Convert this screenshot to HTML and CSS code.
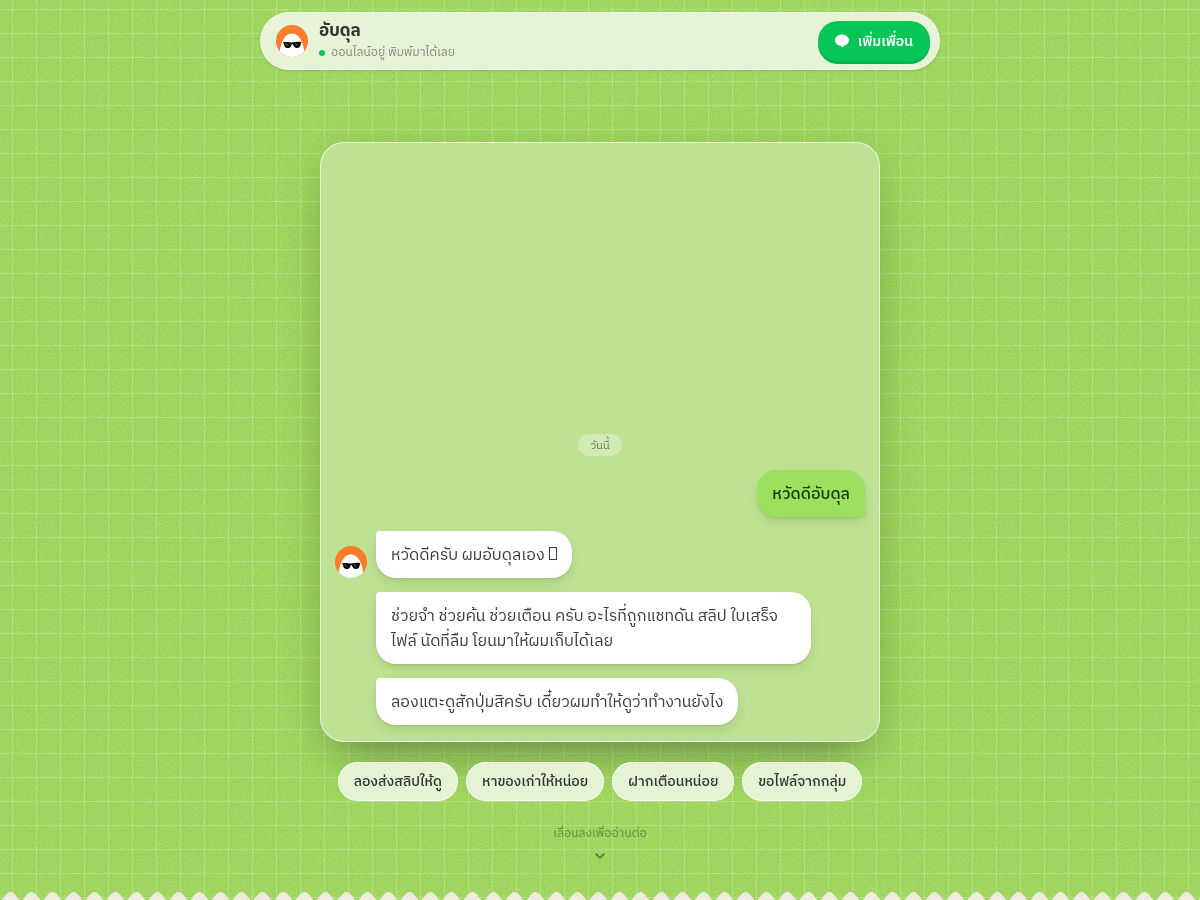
FILE: index.html
```html
<!DOCTYPE html>
<html lang="th">
<head>
    <meta charset="UTF-8">
    <meta name="viewport" content="width=device-width, initial-scale=1.0">
    <title>อับดุล</title>
    <link rel="stylesheet" href="styles.css">
</head>
<body>
    <svg class="defs" aria-hidden="true">
        <symbol id="avatar" viewBox="0 0 32 32">
            <clipPath id="round"><circle cx="16" cy="16" r="16"/></clipPath>
            <g clip-path="url(#round)">
                <rect width="32" height="32" fill="#fb7d2b"/>
                <path d="M3.500 33c0-9 1.500-15 4.500-19.500C10 10 12.500 8.500 16 8.500s6 1.500 8 5C27 18 28.500 24 28.500 33z" fill="#fff"/>
                <path d="M7 17.200c3-.5 6-.4 9 .2 3-.7 5.800-.9 9-.5l.6.800-.7.500c-.2 3.200-1.500 4.800-3.900 4.800-2.300 0-3.500-1.400-4.100-3.800h-1.300c-.5 2.500-1.700 3.900-3.900 3.900-2.500 0-3.700-1.600-3.900-4.800l-1-.4z" fill="#0b0b0b"/>
                <path d="M9.500 18.400l2.500 2M19 18.400l2.500 2" stroke="#888" stroke-width=".8"/>
            </g>
        </symbol>
    </svg>

    <div class="page">
        <svg class="noise" aria-hidden="true">
            <filter id="grain" x="0" y="0" width="100%" height="100%" color-interpolation-filters="sRGB">
                <feTurbulence type="fractalNoise" baseFrequency="0.8" numOctaves="2"/>
                <feColorMatrix type="matrix" values="2 0 0 0 -0.500  2 0 0 0 -0.500  2 0 0 0 -0.500  0 0 0 0 1"/>
            </filter>
            <rect width="100%" height="100%" filter="url(#grain)"/>
        </svg>

        <header class="topbar">
            <svg class="avatar"><use href="#avatar"/></svg>
            <div class="who">
                <h1 class="name">อับดุล</h1>
                <p class="status"><span class="dot"></span>ออนไลน์อยู่ พิมพ์มาได้เลย</p>
            </div>
            <button class="add-friend" type="button">
                <svg class="bubble-icon" viewBox="0 0 14 14"><path d="M7 .5c3.900 0 7 2.500 7 5.800 0 2.800-2.200 4.900-5 5.500L7.200 13.600 6.300 12C2.700 11.700 0 9.400 0 6.300 0 3 3.100.5 7 .5z" fill="#fff"/></svg>
                เพิ่มเพื่อน
            </button>
        </header>

        <main class="hero">
            <section class="chat">
                <span class="day">วันนี้</span>
                <p class="msg mine">หวัดดีอับดุล</p>
                <div class="row">
                    <svg class="avatar"><use href="#avatar"/></svg>
                    <p class="msg">หวัดดีครับ ผมอับดุลเอง <span class="tofu"></span></p>
                </div>
                <p class="msg indent">ช่วยจำ ช่วยค้น ช่วยเตือน ครับ อะไรที่ถูกแชทดัน สลิป ใบเสร็จ ไฟล์ นัดที่ลืม โยนมาให้ผมเก็บได้เลย</p>
                <p class="msg indent">ลองแตะดูสักปุ่มสิครับ เดี๋ยวผมทำให้ดูว่าทำงานยังไง</p>
            </section>

            <div class="chips">
                <button class="chip" type="button">ลองส่งสลิปให้ดู</button>
                <button class="chip" type="button">หาของเก่าให้หน่อย</button>
                <button class="chip" type="button">ฝากเตือนหน่อย</button>
                <button class="chip" type="button">ขอไฟล์จากกลุ่ม</button>
            </div>

            <div class="hint">
                <span>เลื่อนลงเพื่ออ่านต่อ</span>
                <svg class="chevron" viewBox="0 0 16 16"><path d="M4 6l4 4 4-4" fill="none" stroke="currentColor" stroke-width="1.600" stroke-linecap="round" stroke-linejoin="round"/></svg>
            </div>
        </main>

        <svg class="scallop" aria-hidden="true">
            <pattern id="wave" width="21" height="8" patternUnits="userSpaceOnUse">
                <path d="M0 8h1.500C4 6 6.500 0 10.500 0S17 6 19.500 8H21z" fill="#f0ebe0"/>
            </pattern>
            <rect width="100%" height="8" fill="url(#wave)"/>
        </svg>
    </div>
</body>
</html>
```
FILE: styles.css
```css
* {
    box-sizing: border-box;
}

body {
    margin: 0;
    font-family: "IBM Plex Sans Thai", "Noto Sans Thai", "Noto Sans", sans-serif;
    color: #333;
}

h1, p {
    margin: 0;
}

button {
    font-family: inherit;
    cursor: pointer;
}

.defs {
    position: absolute;
    width: 0;
    height: 0;
}

.page {
    position: relative;
    isolation: isolate;
    display: flex;
    flex-direction: column;
    align-items: center;
    min-height: 100vh;
    padding-top: 12px;
    background-color: #a0d760;
    background-image:
        linear-gradient(rgba(255, 255, 255, 0.22) 1px, transparent 1px),
        linear-gradient(90deg, rgba(255, 255, 255, 0.22) 1px, transparent 1px);
    background-size: 24px 24px;
    background-position: 12px 9px;
}

.noise {
    position: absolute;
    inset: 0;
    z-index: -1;
    width: 100%;
    height: 100%;
    opacity: 0.22;
    mix-blend-mode: soft-light;
}

/* top bar */
.topbar {
    display: flex;
    align-items: center;
    gap: 11px;
    width: calc(100% - 24px);
    max-width: 680px;
    height: 58px;
    padding: 0 9px 0 15px;
    border: 1px solid rgba(255, 255, 255, 0.6);
    border-radius: 29px;
    background: #e6f3d6;
    box-shadow: 0 1px 3px rgba(40, 80, 10, 0.2);
}

.avatar {
    flex: none;
    width: 32px;
    height: 32px;
}

.who {
    flex: 1;
    padding-top: 2px;
}

.name {
    font-size: 17px;
    line-height: 21px;
    font-weight: 700;
}

.status {
    display: flex;
    align-items: center;
    gap: 6px;
    font-size: 12px;
    line-height: 21px;
    color: #7f8878;
}

.dot {
    width: 6px;
    height: 6px;
    border-radius: 50%;
    background: #06c755;
}

.add-friend {
    display: flex;
    align-items: center;
    gap: 9px;
    height: 40px;
    padding: 0 17px;
    border: 0;
    border-radius: 20px;
    background: #06c755;
    box-shadow: 0 3px 0 #05b94f;
    color: #fff;
    font-size: 14px;
    font-weight: 600;
}

.bubble-icon {
    width: 14px;
    height: 14px;
}

/* chat */
.hero {
    flex: 1;
    display: flex;
    flex-direction: column;
    align-items: center;
    width: 100%;
    padding: 72px 12px 0;
}

.chat {
    display: flex;
    flex-direction: column;
    justify-content: flex-end;
    align-items: flex-start;
    gap: 14px;
    width: 100%;
    max-width: 560px;
    min-height: 600px;
    padding: 16px 14px;
    border: 1px solid rgba(255, 255, 255, 0.7);
    border-radius: 24px;
    background: #bfe193;
    box-shadow: 0 24px 48px -20px rgba(70, 80, 50, 0.65), 0 4px 40px rgba(80, 130, 30, 0.15);
}

.day {
    align-self: center;
    padding: 2px 12px 0;
    border-radius: 11px;
    background: rgba(255, 255, 255, 0.3);
    color: #6b7d58;
    font-size: 11px;
    line-height: 20px;
}

.msg {
    max-width: 435px;
    padding: 12px 15px 10px;
    border-radius: 4px 20px 20px 20px;
    background: #fff;
    box-shadow: 0 1px 2px rgba(40, 70, 10, 0.12), 0 6px 14px -4px rgba(40, 70, 10, 0.2);
    color: #3a3a3a;
    font-size: 16px;
    line-height: 25px;
}

.mine {
    align-self: flex-end;
    border-radius: 20px 20px 4px 20px;
    background: #9be15d;
    color: #173a0a;
    font-weight: 500;
}

.row {
    display: flex;
    align-items: flex-end;
    gap: 9px;
}

.indent {
    margin-left: 41px;
}

.tofu {
    display: inline-block;
    width: 8px;
    height: 13px;
    margin-left: 1px;
    border: 1px solid #3a3a3a;
}

.chips {
    display: flex;
    flex-wrap: wrap;
    justify-content: center;
    gap: 8px;
    padding-top: 20px;
}

.chip {
    height: 39px;
    padding: 0 15px;
    border: 1px solid rgba(255, 255, 255, 0.7);
    border-radius: 20px;
    background: #e5f3d5;
    color: #333;
    font-size: 14px;
    font-weight: 500;
}

.hint {
    display: flex;
    flex-direction: column;
    align-items: center;
    gap: 4px;
    padding-top: 23px;
    color: #64873c;
    font-size: 12px;
    line-height: 20px;
}

.chevron {
    width: 16px;
    height: 16px;
    color: #4f6b30;
}

.scallop {
    display: block;
    width: 100%;
    height: 8px;
}
```
